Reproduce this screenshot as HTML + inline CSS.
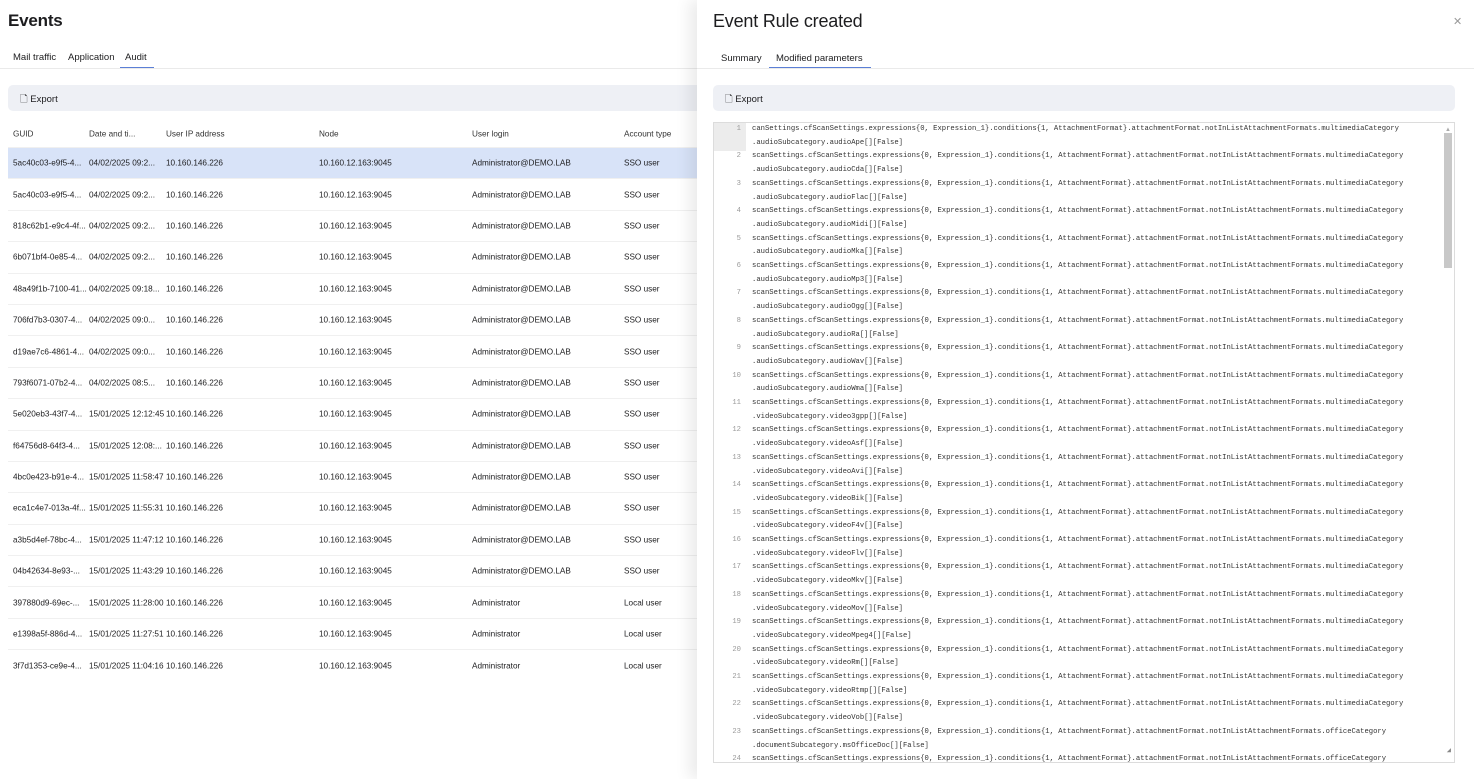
<!DOCTYPE html>
<html><head><meta charset="utf-8"><style>
*{box-sizing:border-box;margin:0;padding:0}
body{width:1474px;height:779px;overflow:hidden;background:#fff;font-family:"Liberation Sans",sans-serif;color:#1d1d1f;position:relative}
.h1{position:absolute;font-size:17px;font-weight:bold;letter-spacing:-0.2px}
.tabs{position:absolute;font-size:9.5px;white-space:nowrap}
.tabs span{position:absolute;top:0;white-space:nowrap}
.ul{position:absolute;height:2px;background:#5b7fd6}
.bar{position:absolute;background:#eef0f5;border-radius:5px;font-size:9.5px}
.tbl{position:absolute;left:8px;top:120px;width:700px;font-size:8.2px}
.row{position:relative;height:31.4px;border-bottom:1px solid #f0f0f0}
.row span{position:absolute;top:50%;transform:translateY(-50%);white-space:nowrap}
.hdr span{color:#333}
.sel{background:#d8e3f8}
.drawer{position:absolute;left:697px;top:0;width:777px;height:779px;background:#fff;box-shadow:-8px 0 14px rgba(0,0,0,0.08)}
.code{position:absolute;left:16px;top:122px;width:742px;height:641px;border:1px solid #dcdcdc;overflow:hidden;font-family:"Liberation Mono",monospace;font-size:7.2px;line-height:13.7px;color:#333}
.ln{position:absolute;left:0;width:27px;text-align:right;color:#999}
.tx{position:absolute;left:38px;white-space:pre}
</style></head><body>
<div class="h1" style="left:8px;top:11px">Events</div>
<div class="tabs" style="left:13px;top:52px"><span style="left:0">Mail traffic</span><span style="left:55px">Application</span><span style="left:112px">Audit</span></div>
<div class="ul" style="left:120px;top:67px;width:34px"></div>
<div style="position:absolute;left:0;top:68px;width:697px;height:1px;background:#eaeaea"></div>
<div class="bar" style="left:8px;top:85px;width:700px;height:26px"><span style="position:absolute;left:12px;top:7px">🗋 Export</span></div>
<div class="tbl">
<div class="row hdr" style="height:28px"><span style="left:5px">GUID</span><span style="left:81px">Date and ti...</span><span style="left:158px">User IP address</span><span style="left:311px">Node</span><span style="left:464px">User login</span><span style="left:616px">Account type</span></div>
<div class="row sel"><span style="left:5px">5ac40c03-e9f5-4...</span><span style="left:81px">04/02/2025 09:2...</span><span style="left:158px">10.160.146.226</span><span style="left:311px">10.160.12.163:9045</span><span style="left:464px">Administrator@DEMO.LAB</span><span style="left:616px">SSO user</span></div>
<div class="row"><span style="left:5px">5ac40c03-e9f5-4...</span><span style="left:81px">04/02/2025 09:2...</span><span style="left:158px">10.160.146.226</span><span style="left:311px">10.160.12.163:9045</span><span style="left:464px">Administrator@DEMO.LAB</span><span style="left:616px">SSO user</span></div>
<div class="row"><span style="left:5px">818c62b1-e9c4-4f...</span><span style="left:81px">04/02/2025 09:2...</span><span style="left:158px">10.160.146.226</span><span style="left:311px">10.160.12.163:9045</span><span style="left:464px">Administrator@DEMO.LAB</span><span style="left:616px">SSO user</span></div>
<div class="row"><span style="left:5px">6b071bf4-0e85-4...</span><span style="left:81px">04/02/2025 09:2...</span><span style="left:158px">10.160.146.226</span><span style="left:311px">10.160.12.163:9045</span><span style="left:464px">Administrator@DEMO.LAB</span><span style="left:616px">SSO user</span></div>
<div class="row"><span style="left:5px">48a49f1b-7100-41...</span><span style="left:81px">04/02/2025 09:18...</span><span style="left:158px">10.160.146.226</span><span style="left:311px">10.160.12.163:9045</span><span style="left:464px">Administrator@DEMO.LAB</span><span style="left:616px">SSO user</span></div>
<div class="row"><span style="left:5px">706fd7b3-0307-4...</span><span style="left:81px">04/02/2025 09:0...</span><span style="left:158px">10.160.146.226</span><span style="left:311px">10.160.12.163:9045</span><span style="left:464px">Administrator@DEMO.LAB</span><span style="left:616px">SSO user</span></div>
<div class="row"><span style="left:5px">d19ae7c6-4861-4...</span><span style="left:81px">04/02/2025 09:0...</span><span style="left:158px">10.160.146.226</span><span style="left:311px">10.160.12.163:9045</span><span style="left:464px">Administrator@DEMO.LAB</span><span style="left:616px">SSO user</span></div>
<div class="row"><span style="left:5px">793f6071-07b2-4...</span><span style="left:81px">04/02/2025 08:5...</span><span style="left:158px">10.160.146.226</span><span style="left:311px">10.160.12.163:9045</span><span style="left:464px">Administrator@DEMO.LAB</span><span style="left:616px">SSO user</span></div>
<div class="row"><span style="left:5px">5e020eb3-43f7-4...</span><span style="left:81px">15/01/2025 12:12:45</span><span style="left:158px">10.160.146.226</span><span style="left:311px">10.160.12.163:9045</span><span style="left:464px">Administrator@DEMO.LAB</span><span style="left:616px">SSO user</span></div>
<div class="row"><span style="left:5px">f64756d8-64f3-4...</span><span style="left:81px">15/01/2025 12:08:...</span><span style="left:158px">10.160.146.226</span><span style="left:311px">10.160.12.163:9045</span><span style="left:464px">Administrator@DEMO.LAB</span><span style="left:616px">SSO user</span></div>
<div class="row"><span style="left:5px">4bc0e423-b91e-4...</span><span style="left:81px">15/01/2025 11:58:47</span><span style="left:158px">10.160.146.226</span><span style="left:311px">10.160.12.163:9045</span><span style="left:464px">Administrator@DEMO.LAB</span><span style="left:616px">SSO user</span></div>
<div class="row"><span style="left:5px">eca1c4e7-013a-4f...</span><span style="left:81px">15/01/2025 11:55:31</span><span style="left:158px">10.160.146.226</span><span style="left:311px">10.160.12.163:9045</span><span style="left:464px">Administrator@DEMO.LAB</span><span style="left:616px">SSO user</span></div>
<div class="row"><span style="left:5px">a3b5d4ef-78bc-4...</span><span style="left:81px">15/01/2025 11:47:12</span><span style="left:158px">10.160.146.226</span><span style="left:311px">10.160.12.163:9045</span><span style="left:464px">Administrator@DEMO.LAB</span><span style="left:616px">SSO user</span></div>
<div class="row"><span style="left:5px">04b42634-8e93-...</span><span style="left:81px">15/01/2025 11:43:29</span><span style="left:158px">10.160.146.226</span><span style="left:311px">10.160.12.163:9045</span><span style="left:464px">Administrator@DEMO.LAB</span><span style="left:616px">SSO user</span></div>
<div class="row"><span style="left:5px">397880d9-69ec-...</span><span style="left:81px">15/01/2025 11:28:00</span><span style="left:158px">10.160.146.226</span><span style="left:311px">10.160.12.163:9045</span><span style="left:464px">Administrator</span><span style="left:616px">Local user</span></div>
<div class="row"><span style="left:5px">e1398a5f-886d-4...</span><span style="left:81px">15/01/2025 11:27:51</span><span style="left:158px">10.160.146.226</span><span style="left:311px">10.160.12.163:9045</span><span style="left:464px">Administrator</span><span style="left:616px">Local user</span></div>
<div class="row" style="border:none"><span style="left:5px">3f7d1353-ce9e-4...</span><span style="left:81px">15/01/2025 11:04:16</span><span style="left:158px">10.160.146.226</span><span style="left:311px">10.160.12.163:9045</span><span style="left:464px">Administrator</span><span style="left:616px">Local user</span></div>
</div>

<div class="drawer">
<div class="h1" style="left:16px;top:11px;font-weight:normal;font-size:18px">Event Rule created</div>
<div style="position:absolute;left:756px;top:15px;color:#999;font-size:11px">✕</div>
<div class="tabs" style="left:24px;top:53px"><span style="left:0">Summary</span><span style="left:55px">Modified parameters</span></div>
<div class="ul" style="left:72px;top:67px;width:102px"></div>
<div style="position:absolute;left:0;top:68px;width:777px;height:1px;background:#eaeaea"></div>
<div class="bar" style="left:16px;top:85px;width:742px;height:26px"><span style="position:absolute;left:12px;top:7px">🗋 Export</span></div>
<div class="code">
<div style="position:absolute;left:0;top:0;width:32px;height:28px;background:#ececec"></div>
<div style="position:absolute;right:2px;top:10px;width:8px;height:135px;background:#c8c8c8"></div>
<div style="position:absolute;right:3px;top:1px;font-size:6px;color:#aaa;font-family:'Liberation Sans'">▲</div>
<div class="ln" style="top:0">1</div><div class="tx" style="top:0">canSettings.cfScanSettings.expressions{0, Expression_1}.conditions{1, AttachmentFormat}.attachmentFormat.notInListAttachmentFormats.multimediaCategory
.audioSubcategory.audioApe[][False]</div>
<div class="ln" style="top:27.4px">2</div><div class="tx" style="top:27.4px">scanSettings.cfScanSettings.expressions{0, Expression_1}.conditions{1, AttachmentFormat}.attachmentFormat.notInListAttachmentFormats.multimediaCategory
.audioSubcategory.audioCda[][False]</div>
<div class="ln" style="top:54.8px">3</div><div class="tx" style="top:54.8px">scanSettings.cfScanSettings.expressions{0, Expression_1}.conditions{1, AttachmentFormat}.attachmentFormat.notInListAttachmentFormats.multimediaCategory
.audioSubcategory.audioFlac[][False]</div>
<div class="ln" style="top:82.2px">4</div><div class="tx" style="top:82.2px">scanSettings.cfScanSettings.expressions{0, Expression_1}.conditions{1, AttachmentFormat}.attachmentFormat.notInListAttachmentFormats.multimediaCategory
.audioSubcategory.audioMidi[][False]</div>
<div class="ln" style="top:109.6px">5</div><div class="tx" style="top:109.6px">scanSettings.cfScanSettings.expressions{0, Expression_1}.conditions{1, AttachmentFormat}.attachmentFormat.notInListAttachmentFormats.multimediaCategory
.audioSubcategory.audioMka[][False]</div>
<div class="ln" style="top:137px">6</div><div class="tx" style="top:137px">scanSettings.cfScanSettings.expressions{0, Expression_1}.conditions{1, AttachmentFormat}.attachmentFormat.notInListAttachmentFormats.multimediaCategory
.audioSubcategory.audioMp3[][False]</div>
<div class="ln" style="top:164.4px">7</div><div class="tx" style="top:164.4px">scanSettings.cfScanSettings.expressions{0, Expression_1}.conditions{1, AttachmentFormat}.attachmentFormat.notInListAttachmentFormats.multimediaCategory
.audioSubcategory.audioOgg[][False]</div>
<div class="ln" style="top:191.8px">8</div><div class="tx" style="top:191.8px">scanSettings.cfScanSettings.expressions{0, Expression_1}.conditions{1, AttachmentFormat}.attachmentFormat.notInListAttachmentFormats.multimediaCategory
.audioSubcategory.audioRa[][False]</div>
<div class="ln" style="top:219.2px">9</div><div class="tx" style="top:219.2px">scanSettings.cfScanSettings.expressions{0, Expression_1}.conditions{1, AttachmentFormat}.attachmentFormat.notInListAttachmentFormats.multimediaCategory
.audioSubcategory.audioWav[][False]</div>
<div class="ln" style="top:246.6px">10</div><div class="tx" style="top:246.6px">scanSettings.cfScanSettings.expressions{0, Expression_1}.conditions{1, AttachmentFormat}.attachmentFormat.notInListAttachmentFormats.multimediaCategory
.audioSubcategory.audioWma[][False]</div>
<div class="ln" style="top:274px">11</div><div class="tx" style="top:274px">scanSettings.cfScanSettings.expressions{0, Expression_1}.conditions{1, AttachmentFormat}.attachmentFormat.notInListAttachmentFormats.multimediaCategory
.videoSubcategory.video3gpp[][False]</div>
<div class="ln" style="top:301.4px">12</div><div class="tx" style="top:301.4px">scanSettings.cfScanSettings.expressions{0, Expression_1}.conditions{1, AttachmentFormat}.attachmentFormat.notInListAttachmentFormats.multimediaCategory
.videoSubcategory.videoAsf[][False]</div>
<div class="ln" style="top:328.8px">13</div><div class="tx" style="top:328.8px">scanSettings.cfScanSettings.expressions{0, Expression_1}.conditions{1, AttachmentFormat}.attachmentFormat.notInListAttachmentFormats.multimediaCategory
.videoSubcategory.videoAvi[][False]</div>
<div class="ln" style="top:356.2px">14</div><div class="tx" style="top:356.2px">scanSettings.cfScanSettings.expressions{0, Expression_1}.conditions{1, AttachmentFormat}.attachmentFormat.notInListAttachmentFormats.multimediaCategory
.videoSubcategory.videoBik[][False]</div>
<div class="ln" style="top:383.6px">15</div><div class="tx" style="top:383.6px">scanSettings.cfScanSettings.expressions{0, Expression_1}.conditions{1, AttachmentFormat}.attachmentFormat.notInListAttachmentFormats.multimediaCategory
.videoSubcategory.videoF4v[][False]</div>
<div class="ln" style="top:411px">16</div><div class="tx" style="top:411px">scanSettings.cfScanSettings.expressions{0, Expression_1}.conditions{1, AttachmentFormat}.attachmentFormat.notInListAttachmentFormats.multimediaCategory
.videoSubcategory.videoFlv[][False]</div>
<div class="ln" style="top:438.4px">17</div><div class="tx" style="top:438.4px">scanSettings.cfScanSettings.expressions{0, Expression_1}.conditions{1, AttachmentFormat}.attachmentFormat.notInListAttachmentFormats.multimediaCategory
.videoSubcategory.videoMkv[][False]</div>
<div class="ln" style="top:465.8px">18</div><div class="tx" style="top:465.8px">scanSettings.cfScanSettings.expressions{0, Expression_1}.conditions{1, AttachmentFormat}.attachmentFormat.notInListAttachmentFormats.multimediaCategory
.videoSubcategory.videoMov[][False]</div>
<div class="ln" style="top:493.2px">19</div><div class="tx" style="top:493.2px">scanSettings.cfScanSettings.expressions{0, Expression_1}.conditions{1, AttachmentFormat}.attachmentFormat.notInListAttachmentFormats.multimediaCategory
.videoSubcategory.videoMpeg4[][False]</div>
<div class="ln" style="top:520.6px">20</div><div class="tx" style="top:520.6px">scanSettings.cfScanSettings.expressions{0, Expression_1}.conditions{1, AttachmentFormat}.attachmentFormat.notInListAttachmentFormats.multimediaCategory
.videoSubcategory.videoRm[][False]</div>
<div class="ln" style="top:548px">21</div><div class="tx" style="top:548px">scanSettings.cfScanSettings.expressions{0, Expression_1}.conditions{1, AttachmentFormat}.attachmentFormat.notInListAttachmentFormats.multimediaCategory
.videoSubcategory.videoRtmp[][False]</div>
<div class="ln" style="top:575.4px">22</div><div class="tx" style="top:575.4px">scanSettings.cfScanSettings.expressions{0, Expression_1}.conditions{1, AttachmentFormat}.attachmentFormat.notInListAttachmentFormats.multimediaCategory
.videoSubcategory.videoVob[][False]</div>
<div class="ln" style="top:602.8px">23</div><div class="tx" style="top:602.8px">scanSettings.cfScanSettings.expressions{0, Expression_1}.conditions{1, AttachmentFormat}.attachmentFormat.notInListAttachmentFormats.officeCategory
.documentSubcategory.msOfficeDoc[][False]</div>
<div class="ln" style="top:630.2px">24</div><div class="tx" style="top:630.2px">scanSettings.cfScanSettings.expressions{0, Expression_1}.conditions{1, AttachmentFormat}.attachmentFormat.notInListAttachmentFormats.officeCategory</div>
<div style="position:absolute;right:3px;bottom:3px;font-size:7px;color:#888">◢</div>
</div>
</div>
</body></html>
